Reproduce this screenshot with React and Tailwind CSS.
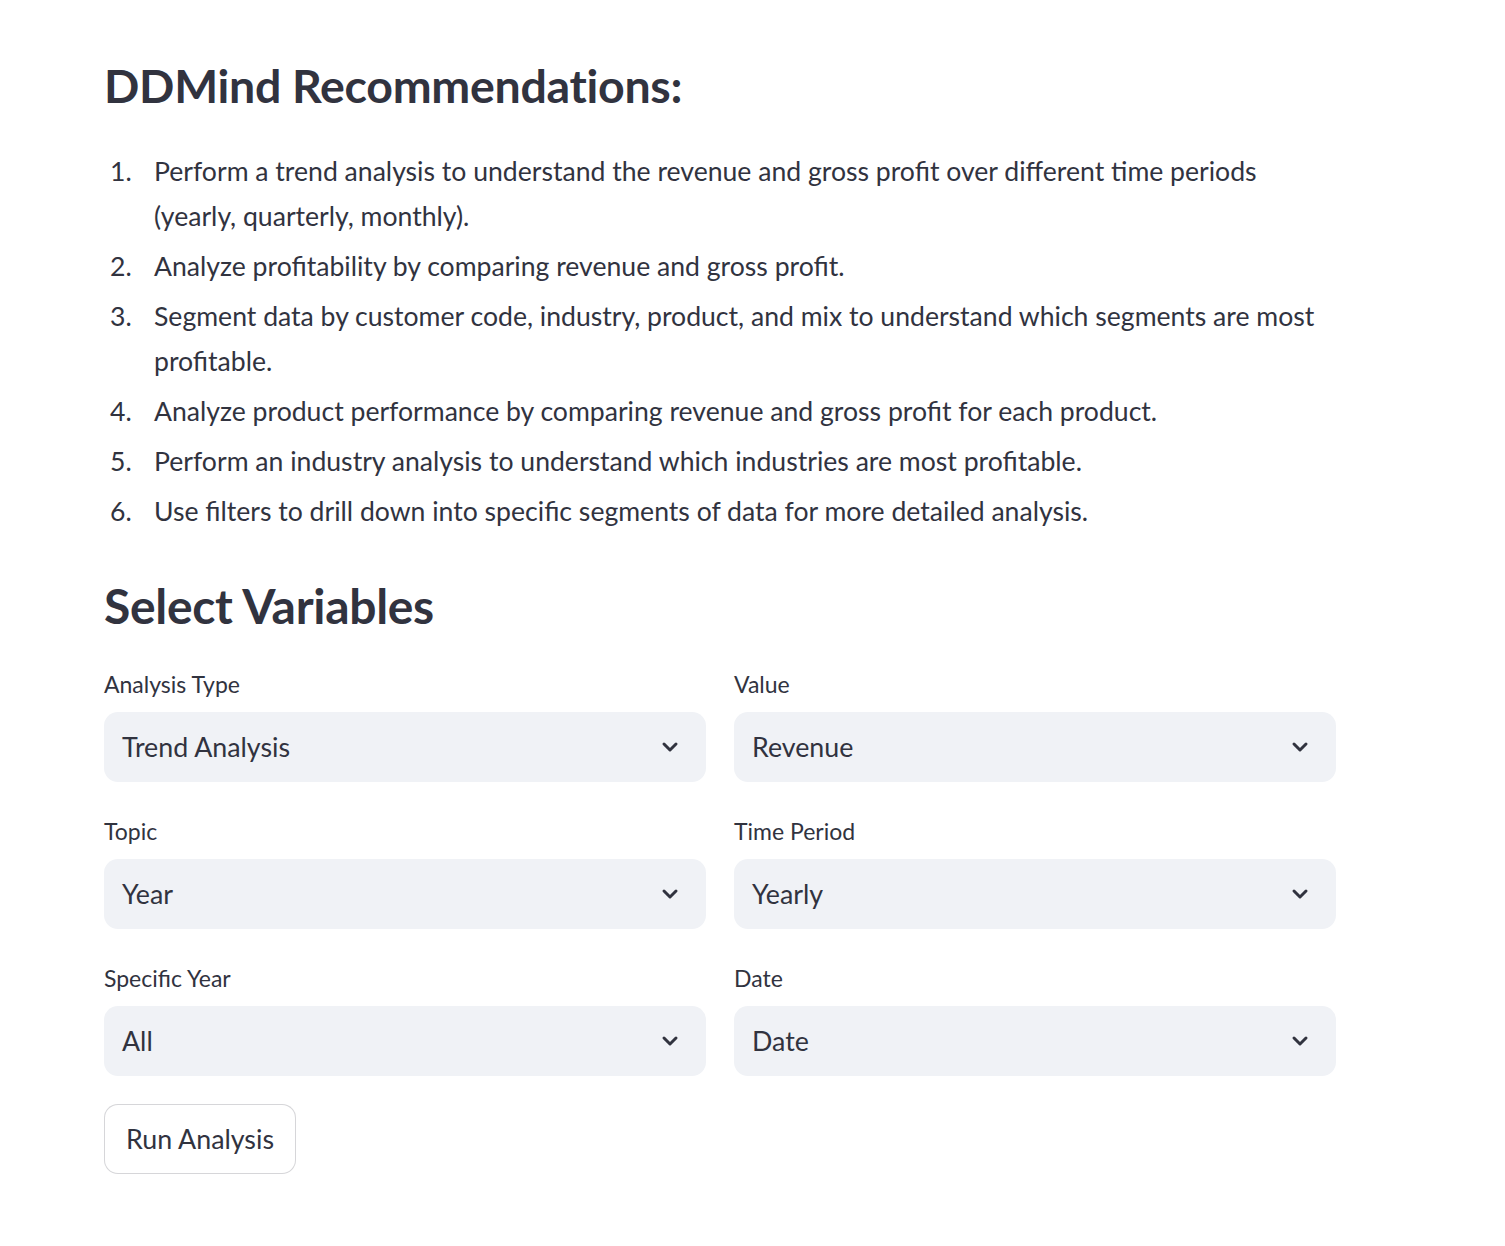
import { ChevronDown } from 'lucide-react';

const items = [
  'Perform a trend analysis to understand the revenue and gross profit over different time periods (yearly, quarterly, monthly).',
  'Analyze profitability by comparing revenue and gross profit.',
  'Segment data by customer code, industry, product, and mix to understand which segments are most profitable.',
  'Analyze product performance by comparing revenue and gross profit for each product.',
  'Perform an industry analysis to understand which industries are most profitable.',
  'Use filters to drill down into specific segments of data for more detailed analysis.',
];

function SelectBox({ label, value }) {
  return (
    <div className="flex flex-col">
      <div className="h-[28px] text-[23px] leading-[28px] text-[#31333f]">{label}</div>
      <div className="mt-[14px] flex h-[70px] items-center justify-between rounded-[14px] bg-[#f0f2f6] pl-[18px] pr-[24px]">
        <span className="text-[26.8px] text-[#31333f]">{value}</span>
        <ChevronDown className="h-[24px] w-[24px] text-[#31333f]" strokeWidth={3} />
      </div>
    </div>
  );
}

export default function App() {
  return (
    <div className="min-h-[1246px] bg-white font-['Lato',sans-serif] text-[#31333f]">
      <div className="w-[1336px] pl-[104px] pt-[58px]">
        <h3 className="text-[46.5px] font-bold leading-[54px] tracking-[-0.3px]">DDMind Recommendations:</h3>

        <ol className="mt-[37px] flex flex-col gap-[5px] text-[26.6px] leading-[45px]">
          {items.map((text, i) => (
            <li key={i} className="flex">
              <span className="w-[50px] shrink-0 pl-[6px]">{i + 1}.</span>
              <span className="pr-[10px]">{text}</span>
            </li>
          ))}
        </ol>

        <h2 className="mt-[42px] text-[48px] font-bold leading-[60px] tracking-[-0.3px]">Select Variables</h2>

        <div className="mt-[34px] grid grid-cols-2 gap-x-[28px] gap-y-[35px]">
          <SelectBox label="Analysis Type" value="Trend Analysis" />
          <SelectBox label="Value" value="Revenue" />
          <SelectBox label="Topic" value="Year" />
          <SelectBox label="Time Period" value="Yearly" />
          <SelectBox label="Specific Year" value="All" />
          <SelectBox label="Date" value="Date" />
        </div>

        <button className="mt-[28px] h-[70px] rounded-[14px] border border-[#31333f33] bg-white px-[21px] text-[26.8px] text-[#31333f]">
          Run Analysis
        </button>
      </div>
    </div>
  );
}
